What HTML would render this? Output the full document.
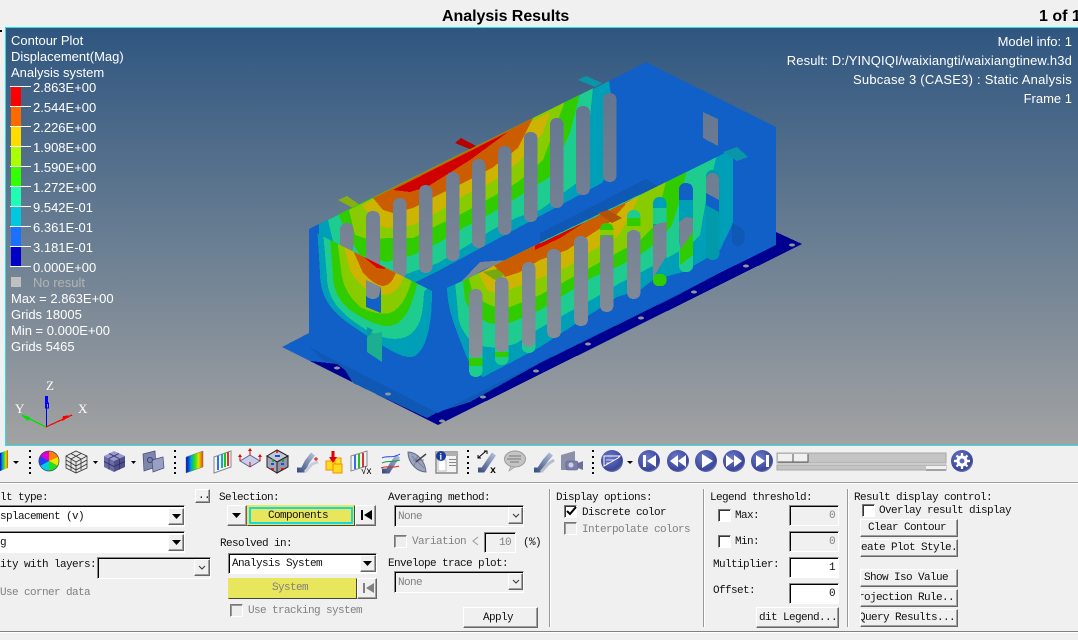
<!DOCTYPE html>
<html><head><meta charset="utf-8"><style>
html,body{margin:0;padding:0;background:#f0f0f0}
#p{position:relative;width:1078px;height:640px;overflow:hidden;background:#f0f0f0}
.a{position:absolute}
.l{position:absolute;font:13px/16px "Liberation Sans",sans-serif;color:#fff;white-space:pre}
.t{position:absolute;font:11px/12px "Liberation Mono",monospace;letter-spacing:-.6px;color:#111;white-space:pre}
.g{color:#808080}
.b{position:absolute;box-sizing:border-box;background:#f0f0f0;border:1px solid;border-color:#fff #666 #666 #fff;box-shadow:inset -1px -1px 0 #a0a0a0;overflow:hidden}
.c{position:absolute;box-sizing:border-box;background:#fff;border:1px solid;border-color:#8a8a8a #fff #fff #8a8a8a;box-shadow:inset 1px 1px 0 #000}
.d{background:#f0f0f0}
.k{position:absolute;box-sizing:border-box;width:13px;height:13px;background:#fff;border:1px solid;border-color:#777 #fff #fff #777;box-shadow:inset 1px 1px 0 #333}
.kd{background:#eee;box-shadow:inset 1px 1px 0 #999}
.s{position:absolute;width:1px;background:#999;border-right:1px solid #fff;top:489px;height:138px}
.y{position:absolute;box-sizing:border-box;background:#e8e65c}
</style></head><body><div id="p">
<div class="a" style="left:442px;top:8px;font:bold 16px/18px 'Liberation Sans',sans-serif;letter-spacing:-.05px;color:#000">Analysis Results</div>
<div class="a" style="left:1039px;top:8px;font:bold 16px/18px 'Liberation Sans',sans-serif;color:#000;white-space:pre">1 of 1</div>
<div class="a" style="left:0;top:30px;width:2px;height:2px;background:#000"></div>

<svg class="a" style="left:0;top:0" width="1078" height="640" viewBox="0 0 1078 640" shape-rendering="crispEdges">
<defs>
<linearGradient id="bg" gradientUnits="userSpaceOnUse" x1="0" y1="27" x2="0" y2="445"><stop offset="0" stop-color="#2f5680"/><stop offset=".5" stop-color="#687d92"/><stop offset="1" stop-color="#a2a2a2"/></linearGradient>
<linearGradient id="sl" gradientUnits="userSpaceOnUse" x1="0" y1="90" x2="0" y2="360"><stop offset="0" stop-color="#637590"/><stop offset="1" stop-color="#888f98"/></linearGradient>
<clipPath id="far"><polygon points="309,229 646,62 646,320 309,400"/></clipPath>
<clipPath id="near"><polygon points="435,293 467,279 540,243 640,195 737,147 737,300 438,420"/></clipPath>
<clipPath id="end"><polygon points="316,233 432,291 436,420 309,360 309,229"/></clipPath>
</defs>
<rect x="5" y="27" width="1073" height="419" fill="url(#bg)"/>
<path d="M5.500 27.500H1078M5.500 27.500V445.500H1078" fill="none" stroke="#1fe6ea" stroke-width="1"/>

<!-- plate -->
<polygon points="282,347 309,333 776,232 802,244 438,425" fill="#000090"/>
<polygon points="282,347 309,333 776,200 776,243 678,295 593,337 540,363 470,402 438,412 427,418 353,383 345,370 337,364 310,361" fill="#1060c8"/>
<polygon points="309,347 438,412 427,418 353,383 345,370 337,364 322,360" fill="#0f58b4"/>
<polygon points="438,412 540,357 592,334 675,293 776,240 776,243 678,295 593,337 540,363 470,402" fill="#0f58b4"/>
<g fill="#8f979f"><ellipse cx="337" cy="368" rx="3" ry="1.500"/><ellipse cx="388" cy="394" rx="3" ry="1.500"/><ellipse cx="442" cy="421" rx="3" ry="1.500"/><ellipse cx="483" cy="397" rx="3" ry="1.500"/><ellipse cx="536" cy="371" rx="3" ry="1.500"/><ellipse cx="588" cy="344" rx="3" ry="1.500"/><ellipse cx="641" cy="318" rx="3" ry="1.500"/><ellipse cx="694" cy="292" rx="3" ry="1.500"/><ellipse cx="746" cy="266" rx="3" ry="1.500"/><ellipse cx="792" cy="245" rx="3" ry="1.500"/></g>

<!-- body -->
<polygon points="309,229 609,81 646,62 776,127 776,245 438,413 309,347" fill="#1060c8"/>

<!-- tabs behind -->
<polygon points="338,200 347,196 360,205 353,208" fill="#86b010"/>
<polygon points="455,143 461,138 478,147 472,150" fill="#b80000"/>
<polygon points="578,80 586,76 602,83 595,87" fill="#0a96a8"/>

<!-- far wall -->
<g clip-path="url(#far)">
<polygon points="319,224 609,81 616,130 614,165 602,183 570,200 540,216 477,250 440,270 360,310 319,300" fill="#009fb8"/>
<polygon points="328,220 593,87 588,137 577,183 563,193 550,203 540,210 518,217 492,230 465,247 438,263 360,290 335,250" fill="#1ecc90"/>
<polygon points="338,214 580,93 570,133 550,177 540,183 518,197 492,213 465,227 438,243 413,255 387,262 360,255 348,235" fill="#30cc00"/>
<polygon points="349,210 565,101 543,160 518,182 492,197 465,212 438,225 413,238 387,238 370,240 355,235" fill="#88cc00"/>
<polygon points="362,205 550,112 543,133 518,163 492,182 465,195 438,212 413,225 387,228 378,225" fill="#ccb400"/>
<polygon points="373,198 533,118 518,148 492,168 465,182 438,195 413,208 393,213 383,210" fill="#cc5c00"/>
<polygon points="393,190 508,132 470,160 427,187 410,192" fill="#d00000"/>
</g>
<g fill="url(#sl)">
<rect x="340" y="223" width="13.500" height="30" rx="6.500"/>
<rect x="366" y="211" width="14" height="70" rx="6.500"/>
<rect x="393" y="198" width="13.500" height="80" rx="6.500"/>
<rect x="419" y="185" width="13.500" height="88" rx="6.500"/>
<rect x="446" y="172" width="13.500" height="89" rx="6.500"/>
<rect x="472" y="159" width="13.500" height="89" rx="6.500"/>
<rect x="498" y="146" width="13.500" height="89" rx="6.500"/>
<rect x="524" y="132" width="13.500" height="90" rx="6.500"/>
<rect x="550" y="118" width="13.500" height="90" rx="6.500"/>
<rect x="576" y="106" width="14" height="89" rx="6.500"/>
<rect x="603" y="93" width="13.500" height="89" rx="6.500"/>
<polygon points="703,112 718,119 718,146 703,138"/>
</g>

<!-- channel -->
<polygon points="430,288 477,263 550,226 646,179 737,147 737,262 540,300 435,293" fill="#1060c8"/>
<polygon points="540,233 646,179 680,198 640,195 540,243" fill="#0f58b4"/>
<polygon points="460,283 480,262 508,260 483,270 467,280" fill="url(#sl)"/>

<!-- near wall -->
<g clip-path="url(#near)">
<path d="M445 270L737 140L733 150V223L720 250L707 258L683 272L653 280L640 290L617 297L540 347L510 363L483 377C474 372 468 362 462 345C456 330 450 315 448 300Z" fill="#009fb8"/>
<path d="M454 270L718 140V150L706 200L700 235L690 245L655 265L620 283L600 295L540 328L517 343C505 348 485 350 472 342C462 332 458 322 458 313Z" fill="#1ecc90"/>
<path d="M462 270L687 160V170L680 200L672 225L660 240L640 255L617 267L593 277L540 310L510 323C498 325 490 325 483 320C472 312 466 305 465 300Z" fill="#30cc00"/>
<path d="M467 270L667 170V178L660 205L655 225L640 240L617 253L540 295L510 307C500 308 492 307 486 303C479 299 475 297 473 295Z" fill="#88cc00"/>
<path d="M477 270L640 190V195L625 225L617 237L593 250L567 267L540 278L503 292C496 293 490 292 487 290Z" fill="#ccb400"/>
<path d="M490 262L625 198V205L610 222L590 235L567 250L540 260L520 272L505 277Z" fill="#cc5c00"/>
<polygon points="535,245 590,219 560,238 535,250" fill="#e00000"/>
<polygon points="590,205 640,195 610,212 590,220 560,234 540,243" fill="#cc5c00"/>
</g>
<path d="M540 243L640 195" stroke="#1ecc90" stroke-width="1" fill="none"/>
<polygon points="598,213 608,210 622,218 612,223" fill="#b25208"/>
<polygon points="483,272 497,269 505,275 495,280" fill="#78a810"/>
<!-- see-through coloured slot parts -->
<rect x="469" y="340" width="13.500" height="37" rx="6.500" fill="#1ecc90"/><rect x="469" y="358" width="13.500" height="8" fill="#30cc00"/>
<rect x="495" y="335" width="13.500" height="30" rx="6.500" fill="#1ecc90"/><rect x="495" y="352" width="13.500" height="5" fill="#30cc00"/>
<rect x="522" y="335" width="13.500" height="18" rx="6.500" fill="#1ecc90"/>
<rect x="600" y="223" width="13.500" height="30" rx="6.500" fill="#30cc00"/>
<rect x="600" y="230" width="13.500" height="5" fill="#88cc00"/>
<rect x="627" y="210" width="13.500" height="40" rx="6.500" fill="#1ecc90"/><rect x="627" y="218" width="13.500" height="8" fill="#30cc00"/><rect x="627" y="226" width="13.500" height="6" fill="#88cc00"/>
<rect x="653" y="197" width="13.500" height="89" rx="6.500" fill="#009fb8"/><rect x="653" y="208" width="13.500" height="16" fill="#1ecc90"/><rect x="653" y="274" width="13.500" height="12" rx="5" fill="#30cc00"/>
<rect x="679" y="183" width="14" height="89" rx="6.500" fill="#1060c8"/><rect x="679" y="200" width="14" height="60" fill="#009fb8"/><rect x="679" y="240" width="14" height="32" rx="6" fill="#1ecc90"/><polygon points="693,232 693,255 680,265 680,250" fill="#30cc00"/>
<rect x="706" y="170" width="13.500" height="90" rx="6.500" fill="#009aaa"/>
<polygon points="706,193 719,200 719,212 706,205" fill="#1060c8"/>
<g fill="url(#sl)">
<rect x="469" y="289" width="13.500" height="69" rx="6.500"/>
<rect x="495" y="277" width="13.500" height="75" rx="6.500"/>
<rect x="522" y="262" width="13.500" height="85" rx="6.500"/>
<rect x="547" y="249" width="14" height="89" rx="6.500"/>
<rect x="574" y="236" width="14" height="90" rx="6.500"/>
<rect x="600" y="235" width="13.500" height="77" rx="6.500"/>
<rect x="627" y="230" width="13.500" height="69" rx="6.500"/>
<polygon points="653,226 660,223 666.500,222 666.500,256 653,278"/>
<polygon points="679,222 686,217 693,218 693,232 680,250"/>
<path d="M706 193V180a6.500 6.500 0 0 1 13 -1V200Z"/>
</g>
<polygon points="723,152 737,147 748,157 737,161" fill="#0a96a8"/>
<polygon points="732,223 740,227 745,232 744,243 738,247 732,243" fill="#0f58b4"/>

<!-- end wall -->
<polygon points="309,229 316,233 432,291 436,300 438,413 309,347" fill="#1060c8"/>
<g clip-path="url(#end)">
<path d="M317 225L436 285L432 292C432 320 428 348 415 356C405 360 392 352 363 333C340 318 320 305 320 273Z" fill="#009fb8"/>
<path d="M323 230L430 285L424 292C423 312 421 325 412 333C402 342 385 340 370 332C350 320 327 305 327 277Z" fill="#1ecc90"/>
<path d="M330 235L425 280L417 285C412 302 408 318 396 324C385 330 368 322 350 310C340 302 333 290 333 277Z" fill="#30cc00"/>
<path d="M337 238L420 275L412 280C408 292 404 304 394 311C385 317 370 312 360 307C350 298 344 288 342 277Z" fill="#88cc00"/>
<path d="M343 242L410 272L403 278C400 285 398 290 390 294C382 296 372 293 365 288C358 282 352 276 350 270Z" fill="#ccb400"/>
<path d="M352 248L400 270L396 273C393 280 390 285 384 286C378 286 372 282 363 273Z" fill="#cc5c00"/>
<polygon points="360,254 386,268 384,269 377,268" fill="#e00000"/>
</g>
<polygon points="366,280 381,287 381,313 366,307" fill="#1060c8"/>
<path d="M366 280L381 287L379 296C376 300 370 300 366 296Z" fill="url(#sl)"/>
<polygon points="367,335 382,332 382,362 367,352" fill="#1cae90"/>
<polygon points="367,327 373,330 367,338" fill="#0a96a8"/>

<!-- legend -->
<rect x="11" y="87" width="10" height="20" fill="#ff0000"/><rect x="11" y="107" width="10" height="20" fill="#ff6a00"/><rect x="11" y="127" width="10" height="20" fill="#ffdc00"/><rect x="11" y="147" width="10" height="20" fill="#aaff00"/><rect x="11" y="167" width="10" height="20" fill="#33ff00"/><rect x="11" y="187" width="10" height="20" fill="#1fffb4"/><rect x="11" y="207" width="10" height="20" fill="#00c8e0"/><rect x="11" y="227" width="10" height="20" fill="#1a70ff"/><rect x="11" y="247" width="10" height="20" fill="#0000c8"/>
<rect x="11" y="277" width="10" height="10" fill="#c0c0c0"/>
<g fill="#fff"><rect x="10" y="86" width="21" height="1"/><rect x="10" y="106" width="21" height="1"/><rect x="10" y="126" width="21" height="1"/><rect x="10" y="146" width="21" height="1"/><rect x="10" y="166" width="21" height="1"/><rect x="10" y="186" width="21" height="1"/><rect x="10" y="206" width="21" height="1"/><rect x="10" y="226" width="21" height="1"/><rect x="10" y="246" width="21" height="1"/><rect x="10" y="266" width="21" height="1"/></g>

<!-- triad -->
<path d="M46.500 427V396" stroke="#0000ff" stroke-width="1.200"/><rect x="45" y="396" width="3" height="8" fill="#0000ff"/><rect x="45.500" y="403" width="3" height="5" fill="none" stroke="#0000ff"/>
<path d="M46 427L22 415" stroke="#00e000" stroke-width="1.200"/><polygon points="21,415 30,417 28,421" fill="#00e000"/>
<path d="M46 427L72 415" stroke="#ff0000" stroke-width="1.200"/><polygon points="73,415 63,416 62,421" fill="#ff0000"/>
</svg>

<div class="l" style="left:11px;top:33px">Contour Plot</div>
<div class="l" style="left:11px;top:49px">Displacement(Mag)</div>
<div class="l" style="left:11px;top:65px">Analysis system</div>
<div class="l" style="left:33px;top:80px">2.863E+00</div>
<div class="l" style="left:33px;top:100px">2.544E+00</div>
<div class="l" style="left:33px;top:120px">2.226E+00</div>
<div class="l" style="left:33px;top:140px">1.908E+00</div>
<div class="l" style="left:33px;top:160px">1.590E+00</div>
<div class="l" style="left:33px;top:180px">1.272E+00</div>
<div class="l" style="left:33px;top:200px">9.542E-01</div>
<div class="l" style="left:33px;top:220px">6.361E-01</div>
<div class="l" style="left:33px;top:240px">3.181E-01</div>
<div class="l" style="left:33px;top:260px">0.000E+00</div>
<div class="l" style="left:33px;top:275px;color:#b4b4b4">No result</div>
<div class="l" style="left:11px;top:291px">Max = 2.863E+00</div>
<div class="l" style="left:11px;top:307px">Grids 18005</div>
<div class="l" style="left:11px;top:323px">Min = 0.000E+00</div>
<div class="l" style="left:11px;top:339px">Grids 5465</div>
<div class="l" style="left:46px;top:378px;font:13px/16px 'Liberation Serif',serif">Z</div>
<div class="l" style="left:15px;top:401px;font:13px/16px 'Liberation Serif',serif">Y</div>
<div class="l" style="left:78px;top:401px;font:13px/16px 'Liberation Serif',serif">X</div>
<div class="l" style="right:6px;top:34px">Model info: 1</div>
<div class="l" style="right:6px;top:53px;letter-spacing:.12px">Result: D:/YINQIQI/waixiangti/waixiangtinew.h3d</div>
<div class="l" style="right:6px;top:72px;letter-spacing:.23px">Subcase 3 (CASE3) : Static Analysis</div>
<div class="l" style="right:6px;top:91px">Frame 1</div>

<!-- panel structure -->
<div class="a" style="left:0;top:482px;width:1078px;height:1px;background:#a0a0a0;border-bottom:1px solid #fff"></div>
<div class="a" style="left:0;top:631px;width:1078px;height:1px;background:#808080;border-bottom:1px solid #fff"></div>
<div class="s" style="left:549px"></div><div class="s" style="left:703px"></div><div class="s" style="left:847px"></div>

<!-- column 1 -->
<div class="t" style="left:0;top:492px">lt type:</div>
<div class="b" style="left:195px;top:489px;width:15px;height:14px"><span class="t" style="left:2px;top:0">..</span></div>
<div class="c" style="left:-4px;top:505px;width:189px;height:22px"></div>
<div class="t" style="left:0;top:511px">splacement (v)</div>
<div class="b" style="left:168px;top:508px;width:16px;height:17px"></div>
<div class="c" style="left:-4px;top:531px;width:189px;height:22px"></div>
<div class="t" style="left:0;top:537px">g</div>
<div class="b" style="left:168px;top:534px;width:16px;height:17px"></div>
<div class="t" style="left:0;top:559px">ity with layers:</div>
<div class="c d" style="left:97px;top:557px;width:114px;height:22px"></div>
<div class="b" style="left:194px;top:559px;width:16px;height:17px"></div>
<div class="t g" style="left:0;top:587px">Use corner data</div>

<!-- column 2 -->
<div class="t" style="left:219px;top:492px">Selection:</div>
<div class="b" style="left:227px;top:505px;width:20px;height:21px"></div>
<div class="y" style="left:247px;top:505px;width:108px;height:21px;border:1px solid;border-color:#e8e65c #444 #444 #e8e65c"></div>
<div class="y" style="left:249px;top:507px;width:104px;height:17px;border:2px solid #12d8e0"></div>
<div class="t" style="left:268px;top:510px">Components</div>
<div class="b" style="left:355px;top:505px;width:21px;height:21px"></div>
<div class="t" style="left:220px;top:538px">Resolved in:</div>
<div class="c" style="left:228px;top:553px;width:149px;height:21px"></div>
<div class="t" style="left:232px;top:558px">Analysis System</div>
<div class="b" style="left:360px;top:555px;width:16px;height:17px"></div>
<div class="y" style="left:228px;top:578px;width:129px;height:21px;border:1px solid;border-color:#e8e65c #444 #444 #e8e65c"></div>
<div class="t g" style="left:272px;top:582px">System</div>
<div class="b" style="left:357px;top:578px;width:20px;height:21px"></div>
<div class="k kd" style="left:230px;top:604px"></div>
<div class="t g" style="left:248px;top:605px">Use tracking system</div>

<!-- column 3 -->
<div class="t" style="left:388px;top:492px">Averaging method:</div>
<div class="c d" style="left:394px;top:505px;width:130px;height:22px"></div>
<div class="t g" style="left:398px;top:511px">None</div>
<div class="b" style="left:508px;top:507px;width:15px;height:17px"></div>
<div class="k kd" style="left:394px;top:535px"></div>
<div class="t g" style="left:412px;top:536px">Variation</div>
<div class="c d" style="left:484px;top:532px;width:32px;height:21px"></div>
<div class="t g" style="left:499px;top:537px">10</div>
<div class="t" style="left:523px;top:537px">(%)</div>
<div class="t" style="left:388px;top:558px">Envelope trace plot:</div>
<div class="c d" style="left:394px;top:571px;width:130px;height:22px"></div>
<div class="t g" style="left:398px;top:577px">None</div>
<div class="b" style="left:508px;top:573px;width:15px;height:17px"></div>
<div class="b" style="left:463px;top:607px;width:75px;height:21px"></div>
<div class="t" style="left:483px;top:612px">Apply</div>

<!-- column 4 -->
<div class="t" style="left:556px;top:492px">Display options:</div>
<div class="k" style="left:564px;top:505px"></div>
<div class="t" style="left:582px;top:507px">Discrete color</div>
<div class="k kd" style="left:564px;top:522px"></div>
<div class="t g" style="left:582px;top:524px">Interpolate colors</div>

<!-- column 5 -->
<div class="t" style="left:710px;top:492px">Legend threshold:</div>
<div class="k" style="left:718px;top:509px"></div>
<div class="t" style="left:735px;top:510px">Max:</div>
<div class="c d" style="left:789px;top:505px;width:50px;height:21px"></div>
<div class="t g" style="left:829px;top:510px">0</div>
<div class="k" style="left:718px;top:535px"></div>
<div class="t" style="left:735px;top:536px">Min:</div>
<div class="c d" style="left:789px;top:531px;width:50px;height:21px"></div>
<div class="t g" style="left:829px;top:536px">0</div>
<div class="t" style="left:713px;top:559px">Multiplier:</div>
<div class="c" style="left:789px;top:557px;width:50px;height:21px"></div>
<div class="t" style="left:829px;top:562px">1</div>
<div class="t" style="left:713px;top:585px">Offset:</div>
<div class="c" style="left:789px;top:583px;width:50px;height:21px"></div>
<div class="t" style="left:829px;top:588px">0</div>
<div class="b" style="left:756px;top:607px;width:83px;height:21px"></div>
<div class="t" style="left:759px;top:612px">dit Legend...</div>

<!-- column 6 -->
<div class="t" style="left:854px;top:492px">Result display control:</div>
<div class="k" style="left:862px;top:504px"></div>
<div class="t" style="left:879px;top:505px">Overlay result display</div>
<div class="b" style="left:860px;top:519px;width:98px;height:18px"></div>
<div class="t" style="left:868px;top:522px">Clear Contour</div>
<div class="b" style="left:860px;top:539px;width:98px;height:18px"></div>
<div class="t" style="left:861px;top:542px">eate Plot Style.</div>
<div class="b" style="left:860px;top:569px;width:98px;height:18px"></div>
<div class="t" style="left:864px;top:572px">Show Iso Value</div>
<div class="b" style="left:860px;top:589px;width:98px;height:18px"></div>
<div class="t" style="left:858px;top:592px;clip-path:inset(0 0 0 3px)">rojection Rule..</div>
<div class="b" style="left:860px;top:609px;width:98px;height:18px"></div>
<div class="t" style="left:859px;top:612px;clip-path:inset(0 0 0 2px)">Query Results...</div>

<!-- overlay glyphs and toolbar -->
<svg class="a" style="left:0;top:0" width="1078" height="640" viewBox="0 0 1078 640">
<defs>
<radialGradient id="rb" cx=".4" cy=".35" r=".75"><stop offset="0" stop-color="#6c78c8"/><stop offset=".75" stop-color="#3a4698"/><stop offset="1" stop-color="#8f96c4"/></radialGradient>
<linearGradient id="rain" x1="0" x2="1" y1="0" y2="0"><stop offset="0" stop-color="#0000c0"/><stop offset=".3" stop-color="#00a0e0"/><stop offset=".5" stop-color="#20e020"/><stop offset=".75" stop-color="#e0e000"/><stop offset="1" stop-color="#f04000"/></linearGradient>
<linearGradient id="pipe" x1="0" x2="1" y1="1" y2="0"><stop offset="0" stop-color="#3c4f80"/><stop offset="1" stop-color="#aebbd6"/></linearGradient>
</defs>
<!-- combo triangles -->
<g fill="#000"><polygon points="172,514 181,514 176.500,519"/><polygon points="172,540 181,540 176.500,545"/><polygon points="232,513 241,513 236.500,518"/><polygon points="363,561 372,561 367.500,566"/></g>
<g fill="none" stroke="#333" stroke-width="1"><path d="M199 566l3 3 3-3"/><path d="M513 514l3 3 3-3"/><path d="M513 580l3 3 3-3"/></g>
<rect x="361" y="510" width="2" height="10" fill="#000"/><polygon points="372,510 372,520 364,515" fill="#000"/>
<rect x="363" y="583" width="2" height="10" fill="#808080"/><polygon points="374,583 374,593 366,588" fill="#808080"/>
<path d="M567 511l3 3 6-7" fill="none" stroke="#000" stroke-width="2"/>
<path d="M478 537l-5 4 5 4" fill="none" stroke="#999" stroke-width="1"/>

<!-- toolbar: first -->
<polygon points="0,453 8,450 8,468 0,471" fill="url(#rain)"/>
<polygon points="13,461 19,461 16,464" fill="#000"/>
<g fill="#000"><rect x="29" y="450" width="2" height="2"/><rect x="29" y="456" width="2" height="2"/><rect x="29" y="462" width="2" height="2"/><rect x="29" y="467" width="2" height="2"/><rect x="29" y="472" width="2" height="2"/>
<rect x="174" y="450" width="2" height="2"/><rect x="174" y="456" width="2" height="2"/><rect x="174" y="462" width="2" height="2"/><rect x="174" y="467" width="2" height="2"/><rect x="174" y="472" width="2" height="2"/>
<rect x="467" y="450" width="2" height="2"/><rect x="467" y="456" width="2" height="2"/><rect x="467" y="462" width="2" height="2"/><rect x="467" y="467" width="2" height="2"/><rect x="467" y="472" width="2" height="2"/>
<rect x="592" y="450" width="2" height="2"/><rect x="592" y="456" width="2" height="2"/><rect x="592" y="462" width="2" height="2"/><rect x="592" y="467" width="2" height="2"/><rect x="592" y="472" width="2" height="2"/></g>
<!-- color wheel -->
<g>
<circle cx="49" cy="461" r="10" fill="#ff2020"/>
<path d="M49 461V451A10 10 0 0 1 58 457Z" fill="#ff8000"/><path d="M49 461L58 457A10 10 0 0 1 58 466Z" fill="#e8e800"/>
<path d="M49 461L58 466A10 10 0 0 1 49 471Z" fill="#20e020"/><path d="M49 461V471A10 10 0 0 1 40 466Z" fill="#00d0e0"/>
<path d="M49 461L40 466A10 10 0 0 1 40 456Z" fill="#2040ff"/><path d="M49 461L40 456A10 10 0 0 1 49 451Z" fill="#e000d0"/>
<circle cx="49" cy="461" r="10" fill="none" stroke="#445" stroke-width=".7"/>
</g>
<!-- wire cube -->
<g fill="none" stroke="#333" stroke-width=".8"><polygon points="76,451 87,456 87,468 76,473 66,468 66,456" fill="#e8e8e8"/><path d="M76 462L66 456M76 462L87 456M76 462V473M71 453.500L81 459M81 453.500L71 459M66 460L76 466L87 460M66 464L76 470L87 464M71 459V470M81 459V470"/></g>
<polygon points="93,461 98,461 95.500,464" fill="#000"/>
<!-- solid cube -->
<polygon points="114,451 125,456 114,461 104,456" fill="#9a9ad2"/><polygon points="104,456 114,461 114,472 104,467" fill="#6a6aa8"/><polygon points="125,456 114,461 114,472 125,467" fill="#50508c"/>
<path d="M109 453.500L119 458.500M119 453.500L109 458.500M104 461.500L114 466.500L125 461.500M109 458.500V469.500M119.500 458.500V469.500" stroke="#2c2c58" stroke-width=".7" fill="none"/>
<polygon points="131,461 136,461 133.500,464" fill="#000"/>
<!-- parts -->
<polygon points="143,454 155,451 156,467 144,471" fill="#7f86ae" stroke="#454a78" stroke-width=".7"/>
<polygon points="152,460 163,457 164,468 153,472" fill="#9aa0c4" stroke="#454a78" stroke-width=".7"/>
<circle cx="150" cy="460" r="2.500" fill="none" stroke="#3c4070"/>
<!-- contour -->
<polygon points="186,457 203,451 203,467 186,473" fill="url(#rain)" stroke="#777" stroke-width=".5"/>
<!-- stripes -->
<polygon points="214,457 231,451 231,467 214,473" fill="#f4f4f4" stroke="#888"/>
<rect x="217" y="456" width="2" height="14" fill="#3070f0"/><rect x="221" y="454" width="2" height="14" fill="#10b0b0"/><rect x="224" y="453" width="2" height="14" fill="#20c020"/><rect x="227" y="452" width="2" height="14" fill="#e03030"/>
<!-- plate arrows -->
<polygon points="250,455 260,461 250,467 240,461" fill="#c8cce8" stroke="#555a88" stroke-width=".8"/>
<g stroke="#e00000" stroke-width="1" fill="none"><path d="M250 455V450M240 461V456M260 461V456M250 467V462"/></g>
<g fill="#e00000"><polygon points="248,451 252,451 250,448"/><polygon points="238,457 242,457 240,454"/><polygon points="258,457 262,457 260,454"/></g>
<!-- cube arrows -->
<polygon points="277,450 288,456 277,462 267,456" fill="#c6c6d4" stroke="#222" stroke-width="1"/><polygon points="267,456 277,462 277,473 267,467" fill="#a8a8ba" stroke="#222" stroke-width="1"/><polygon points="288,456 277,462 277,473 288,467" fill="#9494a8" stroke="#222" stroke-width="1"/>
<path d="M275 456h5M271 464h3M281 464h3" stroke="#1050e0" stroke-width="2"/><path d="M277 450v3M271 469h3M281 469h3" stroke="#e00000" stroke-width="1.500"/><path d="M273 459v3M283 459v3" stroke="#10a030" stroke-width="1.500"/>
<!-- pipe -->
<path d="M297 470h6l4-8 6-8" fill="none" stroke="url(#pipe)" stroke-width="5"/><path d="M305 472l7-8 6-2" fill="none" stroke="#c8cdd8" stroke-width="3"/>
<path d="M316 457v4M314 459h4" stroke="#e00000" stroke-width="1"/>
<!-- yellow squares -->
<rect x="331" y="458" width="10" height="10" fill="#ffe030" stroke="#f09000"/><rect x="326" y="461" width="9" height="9" fill="#ffd820" stroke="#f09000"/><rect x="333" y="464" width="9" height="9" fill="#ffd820" stroke="#f09000"/>
<path d="M333 451v8" stroke="#e00000" stroke-width="3"/><polygon points="329,457 337,457 333,463" fill="#e00000"/>
<!-- stripes vx -->
<polygon points="351,456 367,451 367,466 351,471" fill="#f4f4f4" stroke="#888"/>
<rect x="354" y="455" width="2" height="14" fill="#3070f0"/><rect x="358" y="454" width="2" height="14" fill="#20c020"/><rect x="362" y="453" width="2" height="14" fill="#e03030"/>
<text x="361" y="474" font-family="Liberation Sans,sans-serif" font-size="10" fill="#000">√x</text>
<!-- pipe lines -->
<path d="M382 471h6l5-8 5-7" fill="none" stroke="url(#pipe)" stroke-width="5"/>
<path d="M382 458c5-3 10 1 18-4" stroke="#2040f0" fill="none"/><path d="M382 463c6-3 10 0 18-3" stroke="#10a040" fill="none"/><path d="M381 468c6-3 10 1 18-2" stroke="#e02020" fill="none"/>
<!-- dish -->
<path d="M408 452c8 0 17 8 18 20c-8 0-18-8-18-20Z" fill="#9aa4c0" stroke="#666c80"/><path d="M412 456L424 468M418 455L414 466M424 460L413 460" stroke="#6c7490" fill="none" stroke-width=".7"/><path d="M416 462L426 454" stroke="#444" stroke-width="1.500"/>
<!-- info -->
<rect x="436" y="452" width="21" height="21" fill="#f4f4f4" stroke="#8a8a8a" stroke-width="1.500"/><rect x="436" y="452" width="21" height="4" fill="#b0b0b0"/><rect x="449" y="459" width="7" height="1" fill="#888"/><rect x="449" y="462" width="7" height="1" fill="#888"/><rect x="449" y="465" width="7" height="1" fill="#888"/><rect x="438" y="460" width="8" height="11" fill="#fff" stroke="#999" stroke-width=".6"/>
<circle cx="441" cy="456" r="5" fill="#1a3aa0"/><text x="439.500" y="459.500" font-family="Liberation Serif,serif" font-size="9" font-weight="bold" fill="#fff">i</text>
<!-- pipe x -->
<path d="M478 470h5l6-9 5-7" fill="none" stroke="url(#pipe)" stroke-width="5"/><path d="M478 458l8-7M484 451h3v3M478 455v3h3" stroke="#000" fill="none"/>
<text x="490" y="473" font-family="Liberation Mono,monospace" font-size="10" font-weight="bold" fill="#000">x</text>
<!-- bubble -->
<ellipse cx="515" cy="459" rx="10.500" ry="8" fill="#c4c4c4" stroke="#9a9a9a"/><path d="M511 466l-2 5 6-4z" fill="#c4c4c4" stroke="#9a9a9a" stroke-width=".7"/>
<path d="M509 456h12M507 459h14M510 462h9" stroke="#606060" stroke-width=".8"/>
<!-- pipe gray -->
<path d="M534 470h5l6-9 6-7" fill="none" stroke="url(#pipe)" stroke-width="5"/><path d="M541 472l7-8 6-4" fill="none" stroke="#b8bdc8" stroke-width="3"/>
<!-- camera -->
<polygon points="561,455 575,451 575,470 561,470" fill="#8c90a8"/><rect x="566" y="461" width="12" height="9" rx="2" fill="#7a7ea8" stroke="#5a5e80" stroke-width=".6"/><circle cx="571" cy="465" r="2.500" fill="#d0d2e4"/><polygon points="578,463 583,461 583,470 578,468" fill="#6c7098"/>
<!-- round -->
<circle cx="612" cy="461" r="11" fill="url(#rb)"/><polygon points="604,456 620,456 618,458 604,466" fill="none" stroke="#fff" stroke-width="1"/><path d="M606 460h8M606 463h3" stroke="#fff" stroke-width=".8"/>
<polygon points="627,461 633,461 630,464" fill="#000"/>
<circle cx="649" cy="461" r="11" fill="url(#rb)"/><rect x="643" y="455" width="3" height="12" fill="#fff"/><polygon points="656,455 656,467 647,461" fill="#fff"/>
<circle cx="678" cy="461" r="11" fill="url(#rb)"/><polygon points="678,455 678,467 670,461" fill="#fff"/><polygon points="686,455 686,467 678,461" fill="#fff"/>
<circle cx="706" cy="461" r="11" fill="url(#rb)"/><polygon points="702,454 702,468 713,461" fill="#fff"/>
<circle cx="734" cy="461" r="11" fill="url(#rb)"/><polygon points="726,455 726,467 734,461" fill="#fff"/><polygon points="734,455 734,467 742,461" fill="#fff"/>
<circle cx="762" cy="461" r="11" fill="url(#rb)"/><polygon points="756,455 756,467 765,461" fill="#fff"/><rect x="766" y="455" width="3" height="12" fill="#fff"/>
<!-- sliders -->
<rect x="777" y="453" width="169" height="10" fill="#c4c4c4" stroke="#a8a8a8"/>
<rect x="778" y="454" width="30" height="8" fill="#f0f0f0"/><path d="M778 462h30v-8M793 454v8" stroke="#555" fill="none"/>
<rect x="777" y="465" width="169" height="5" fill="#c4c4c4" stroke="#a8a8a8"/>
<rect x="926" y="466" width="20" height="4" fill="#f0f0f0"/><path d="M926 470h20" stroke="#555"/>
<!-- gear -->
<circle cx="962" cy="461" r="11" fill="url(#rb)"/><circle cx="962" cy="461" r="4" fill="none" stroke="#fff" stroke-width="3"/><g stroke="#fff" stroke-width="2.200"><path d="M962 453v3M962 466v3M954 461h3M967 461h3M956.500 455.500l2 2M965.500 464.500l2 2M956.500 466.500l2-2M965.500 457.500l2-2"/></g>
</svg>
</div></body></html>
